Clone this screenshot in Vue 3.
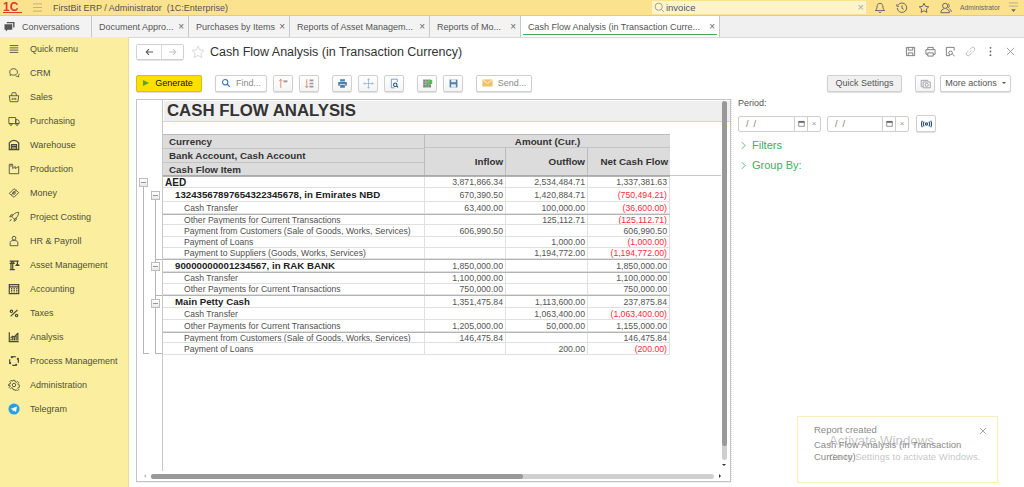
<template>
  <div class="app">
    <header class="topbar">
      <div class="logo"><span class="logo-text">1C</span></div>
      <svg class="burger" viewBox="0 0 12 10"><path d="M1 1h10M1 5h10M1 9h10" /></svg>
      <span class="app-title">FirstBit ERP / Administrator&nbsp; (1C:Enterprise)</span>
      <div class="search">
        <svg class="search-icon" viewBox="0 0 14 14"><circle cx="6" cy="6" r="4.6" /><path d="M9.5 9.5l3 3" /></svg>
        <span class="search-text">invoice</span>
        <span class="search-x">×</span>
      </div>
      <svg class="top-icon" viewBox="0 0 14 14"><path d="M7 1.5c-2.4 0-3.4 1.8-3.4 4 0 2.4-1 3.4-2 4.5h10.8c-1-1.1-2-2.1-2-4.5 0-2.2-1-4-3.4-4zM5.5 11.5c.3 1 2.7 1 3 0" /></svg>
      <svg class="top-icon" viewBox="0 0 14 14"><path d="M2.5 3.5A5.5 5.500 0 1 1 1.500 7M1 2.500v2.500h2.500M7 4v3.500l2 1" /></svg>
      <svg class="top-icon" viewBox="0 0 14 14"><path d="M7 1.500l1.700 3.600 3.800.5-2.800 2.600.7 3.900L7 10.200l-3.400 1.900.7-3.900L1.500 5.600l3.800-.5z" /></svg>
      <svg class="top-icon user-icon" viewBox="0 0 14 14"><circle cx="6" cy="4.500" r="3" /><path d="M1 12.500c0-3 2-4 3.500-4.500M7.500 8c1.500.5 3.500 1.500 3.500 4.500H1M9.500 2c1.500.5 1.800 3.500.3 4.800M11 8c1.200.6 2.200 1.600 2.200 3.500" /></svg>
      <span class="admin">Administrator</span>
      <svg class="top-menu" viewBox="0 0 12 12"><path d="M1 1h10M1 4.500h10" /><path class="fill" d="M3.500 8h5L6 11z" /></svg>
    </header>

    <nav class="tabs">
      <div class="tab tab-home">
        <svg class="conv-icon" viewBox="0 0 12 11"><path d="M3 0h8.500v6H10v-4.500H3z" /><path d="M.5 2.500h8.500v6H4L2 10.500V8.500H.5z" /></svg>
        <span>Conversations</span>
      </div>
      <div v-for="t in tabs" :key="t.label" class="tab" :class="{ active: t.active }" :style="{ width: t.w + 'px' }">
        <span class="tab-label">{{ t.label }}</span>
        <span class="tab-x">×</span>
      </div>
    </nav>

    <div class="main">
      <aside class="sidebar">
        <div v-for="m in menu" :key="m.label" class="menu-item">
          <svg class="menu-icon" :class="{ bold: m.bold }" viewBox="0 0 14 14" v-html="m.icon"></svg>
          <span>{{ m.label }}</span>
        </div>
      </aside>

      <section class="content">
        <div class="title-row">
          <div class="nav-btns">
            <button class="nav-btn"><svg viewBox="0 0 12 10"><path d="M11 5H3M6 1.500L2.500 5 6 8.500" /></svg></button>
            <button class="nav-btn off"><svg viewBox="0 0 12 10"><path d="M1 5h8M6 1.500L9.500 5 6 8.500" /></svg></button>
          </div>
          <svg class="star" viewBox="0 0 14 14"><path d="M7 1l1.800 3.900 4.200.5-3.100 2.900.8 4.200L7 10.400l-3.700 2.100.8-4.200L1 5.400l4.200-.5z" /></svg>
          <h1>Cash Flow Analysis (in Transaction Currency)</h1>
          <div class="win-icons">
            <svg viewBox="0 0 12 12"><path d="M1.500 1.500h9v9h-9zM3.500 1.500v3h5v-3M3.500 10.500v-3h5v3" /></svg>
            <svg viewBox="0 0 12 12"><path d="M3 4V1.500h6V4M3 9H1V4h10v5H9M3 7.500h6v3.500H3z" /></svg>
            <svg viewBox="0 0 12 12"><path d="M10 5V1.500H1.500v9h4M6 5.500a2 2 0 1 0 2 2 2 2 0 0 0-2-2M8 9l2.500 2" /></svg>
            <svg class="light" viewBox="0 0 12 12"><path d="M5 7l2-2M4 5L2 7a2 2 0 0 0 3 3l2-2M8 7l2-2a2 2 0 0 0-3-3L5 4" /></svg>
            <svg class="dots" viewBox="0 0 12 12"><circle cx="6" cy="2" r="1" /><circle cx="6" cy="6" r="1" /><circle cx="6" cy="10" r="1" /></svg>
            <svg class="close" viewBox="0 0 12 12"><path d="M2 2l8 8M10 2l-8 8" /></svg>
          </div>
        </div>

        <div class="toolbar">
          <button class="btn generate"><span class="play"></span>Generate</button>
          <button class="btn find">
            <svg viewBox="0 0 12 12"><circle cx="5" cy="5" r="3.200" /><path d="M7.500 7.500l3 3" /></svg>
            <span>Find...</span>
          </button>
          <button class="btn icon"><svg viewBox="0 0 14 14"><path class="red" d="M3.500 12.500V2M1.500 4l2-2.500 2 2.500" /><path class="grey" d="M7 3h5v2.500H7z" /></svg></button>
          <button class="btn icon"><svg viewBox="0 0 14 14"><path class="red" d="M3.500 1.500V12M1.500 10l2 2.500 2-2.500" /><path class="grey" d="M7 2h5v2H7zM7 6h5v2H7zM7 10h5v2H7z" /></svg></button>
          <button class="btn icon g2"><svg viewBox="0 0 14 14"><path class="blue-f" d="M4 1.500h6v3H4zM1.500 5h11v5h-2V8h-7v2h-2zM4 9h6v3.500H4z" /></svg></button>
          <button class="btn icon"><svg viewBox="0 0 14 14"><path class="blue-light" d="M7 1v12M1 7h12M5.500 2.500L7 1l1.500 1.500M5.500 11.500L7 13l1.500-1.500M2.500 5.500L1 7l1.500 1.500M11.500 5.500L13 7l-1.500 1.500" /></svg></button>
          <button class="btn icon"><svg viewBox="0 0 14 14"><path class="blue" d="M10.500 5V1.500H3v11h4" /><circle class="navy" cx="8" cy="8.500" r="2.200" /><path class="navy" d="M9.600 10l2 2" /></svg></button>
          <button class="btn icon g2"><svg viewBox="0 0 14 14"><path class="dark-f" d="M1.500 2h10v10h-10z" /><path class="light-line" d="M1.500 5h10M1.500 8h10M5 2v10M8 2v10" /><path class="green" d="M4 11l7-6.500M8 3.500h4V7.500" /></svg></button>
          <button class="btn icon"><svg viewBox="0 0 14 14"><path class="blue-f" d="M2 2h10v10H2z" /><path class="white-f" d="M4 2h6v3.500H4zM4 8h6v4H4z" /></svg></button>
          <button class="btn send g2">
            <svg viewBox="0 0 14 10"><path class="mail" d="M.5.500h13v9H.5z" /><path class="mail-line" d="M.5.500L7 5.500l6.500-5" /></svg>
            <span>Send...</span>
          </button>
          <div class="spacer"></div>
          <button class="btn quick">Quick Settings</button>
          <button class="btn icon cam"><svg viewBox="0 0 14 14"><path class="grey-line" d="M1.500 3h9M1.500 3v8h2M4 5h9v7.500H4z" /><circle class="grey-line" cx="8.500" cy="8.700" r="2" /></svg></button>
          <button class="btn more">More actions<span class="caret"></span></button>
        </div>

        <div class="workspace">
          <div class="report">
            <div class="report-body">
              <div class="gutter">
                <span class="tree-v outer"></span>
                <span class="tree-h outer-end"></span>
                <span class="tree-v inner"></span>
                <span class="tree-h inner-a"></span>
                <span class="tree-h inner-b"></span>
                <span class="tree-h inner-end"></span>
                <span v-for="b in treeBoxes" :key="b" class="box" :class="b"></span>
              </div>
              <div class="sheet">
                <div class="report-title">CASH FLOW ANALYSIS</div>
                <div class="grid-head">
                  <div class="hc h-currency">Currency</div>
                  <div class="hc h-amount">Amount (Cur.)</div>
                  <div class="hc h-bank">Bank Account, Cash Account</div>
                  <div class="hc h-inflow">Inflow</div>
                  <div class="hc h-outflow">Outflow</div>
                  <div class="hc h-net">Net Cash Flow</div>
                  <div class="hc h-item">Cash Flow Item</div>
                </div>
                <div
                  v-for="r in rows"
                  :key="r.id"
                  class="row"
                  :class="['lv' + r.lv, { heavy: r.heavy }]"
                  :style="{ height: r.h + 'px' }"
                >
                  <div class="cell name">{{ r.name }}</div>
                  <div class="cell num">{{ r.inflow }}</div>
                  <div class="cell num">{{ r.outflow }}</div>
                  <div class="cell num" :class="{ neg: r.net.startsWith('(') }">{{ r.net }}</div>
                </div>
              </div>
              <div class="vscroll">
                <div class="vtrack"><div class="vthumb"></div></div>
                <span class="sc-arrow down"></span>
              </div>
            </div>
            <div class="hscroll">
              <span class="sc-arrow left"></span>
              <div class="htrack"><div class="hthumb"></div></div>
              <span class="sc-arrow right"></span>
            </div>
          </div>

          <div class="panel">
            <div class="period-label">Period:</div>
            <div class="period-row">
              <div class="date">
                <span class="date-val">/ &nbsp;/</span>
                <span class="date-btn"><svg viewBox="0 0 10 10"><path class="cal" d="M1 2h8v7H1z" /><path class="cal-top" d="M1 1.500h8v2.500H1z" /></svg></span>
                <span class="date-btn x">×</span>
              </div>
              <div class="date second">
                <span class="date-val">/ &nbsp;/</span>
                <span class="date-btn"><svg viewBox="0 0 10 10"><path class="cal" d="M1 2h8v7H1z" /><path class="cal-top" d="M1 1.500h8v2.500H1z" /></svg></span>
                <span class="date-btn x">×</span>
              </div>
              <button class="btn period-btn">
                <svg viewBox="0 0 12 8"><circle cx="6" cy="4" r="1.200" /><path d="M3.500 1.500a4 4 0 0 0 0 5M8.500 1.500a4 4 0 0 1 0 5M1.500.5a6.500 6.500 0 0 0 0 7M10.500.5a6.500 6.500 0 0 1 0 7" /></svg>
              </button>
            </div>
            <div class="group-link first">
              <svg viewBox="0 0 6 10"><path d="M1 1l4 4-4 4" /></svg>
              <span>Filters</span>
            </div>
            <div class="group-link">
              <svg viewBox="0 0 6 10"><path d="M1 1l4 4-4 4" /></svg>
              <span>Group By:</span>
            </div>
          </div>
        </div>

        <div class="toast">
          <div class="toast-title">Report created</div>
          <div class="toast-text">Cash Flow Analysis (in Transaction Currency)</div>
          <svg class="toast-x" viewBox="0 0 8 8"><path d="M1 1l6 6M7 1L1 7" /></svg>
        </div>
        <div class="watermark">
          <div class="wm-big">Activate Windows</div>
          <div class="wm-small">Go to Settings to activate Windows.</div>
        </div>
      </section>
    </div>
  </div>
</template>

<script setup>
const tabs = [
  { label: 'Document Appro...', w: 97 },
  { label: 'Purchases by Items', w: 101 },
  { label: 'Reports of Asset Managem...', w: 140 },
  { label: 'Reports of Mo...', w: 91 },
  { label: 'Cash Flow Analysis (in Transaction Curre...', w: 199, active: true }
];

const menu = [
  { label: 'Quick menu', icon: '<path d="M2 3h10M2 5.700h10M2 8.300h10M2 11h10"/>' },
  { label: 'CRM', icon: '<path d="M2 6c0-2.500 2-4 4.500-4S11 3.500 11 6 9 9.500 6.500 9.500c-1 0-1.500 0-2.500-.5L2.500 10l.3-2C2.200 7.500 2 7 2 6zM9 10.500c.8.500 1.500.500 2.300.500l1.200.7-.2-1.700c.5-.5.700-1.200.7-2"/>' },
  { label: 'Sales', icon: '<path d="M1.500 5.500h11l-1 7h-9zM4 5.500l1-3.500h4l1 3.500M5 8v2.500M7 8v2.500M9 8v2.500"/>' },
  { label: 'Purchasing', icon: '<path d="M1 3h8v7H1zM9 5.500h2.500L13 7.500V10H9z"/><circle cx="3.500" cy="11" r="1.200"/><circle cx="10.500" cy="11" r="1.200"/>' },
  { label: 'Warehouse', icon: '<path d="M1.500 12.500V4.500C3 2.500 5 1.500 7 1.500s4 1 5.500 3v8zM4 12.500V6.500h6v6M4 8.500h6M4 10.500h6"/>', bold: true },
  { label: 'Production', icon: '<path d="M1.500 12.500V1.500h4v5l3-2.500v2.500l4-2.500v8.500zM3.500 1.500v3"/>' },
  { label: 'Money', icon: '<path d="M1.500 7.500L7 2l5.500 4.500L7 12zM4 9l6-5.500"/><circle cx="7" cy="7" r="1.500"/>' },
  { label: 'Project Costing', icon: '<path d="M6 8l-1.500-1.500C6 3.500 9 1.500 12.500 1.500 12.500 5 10.500 8 7.500 9.500zM4.500 6.500L2 7l1.500-2.500h2.500M7.500 9.500L7 12l2.500-1.500V8M2 12l2-2.500"/>' },
  { label: 'HR & Payroll', icon: '<circle cx="7" cy="3.700" r="2.200"/><path d="M2.500 12.500V9c0-1.500 1.500-2.500 3-2.500h3c1.500 0 3 1 3 2.500v3.500z"/>' },
  { label: 'Asset Management', icon: '<path d="M2 12.500h6M3.500 12.500V5M5.500 12.500V5M2 2.500h10.500M3 5h4L5.500 2.500zM11 2.500v3M9.500 7.500l1.500-2 1.500 2z"/>', bold: true },
  { label: 'Accounting', icon: '<path d="M1.500 2h11v10.500h-11zM1.500 4.500h11M3.500 6.500h1.500M6.500 6.500H8M9.500 6.500H11M3.500 8.500h1.500M6.500 8.500H8M9.500 8.500H11M3.500 10.500h1.500M6.500 10.500H8M9.500 10.500H11"/>', bold: true },
  { label: 'Taxes', icon: '<path d="M3 11l8-7.500"/><circle cx="4" cy="5" r="1.400"/><circle cx="10" cy="10" r="1.400"/>', bold: true },
  { label: 'Analysis', icon: '<path d="M1.500 1.500v11h11M3.500 11V9M5.500 11V7M7.500 11V8M9.500 11V5M11.500 11V2M3 8l2.500-2 2 1 2-2.500 2-2"/>', bold: true },
  { label: 'Process Management', icon: '<path d="M5 2.200A5.200 5.200 0 0 1 9 2.200M11.500 4.500A5.200 5.200 0 0 1 11.800 9M9 11.800A5.200 5.200 0 0 1 5 11.800M2.500 9.500A5.200 5.200 0 0 1 2.200 5"/><circle cx="4.500" cy="2.500" r=".6"/><circle cx="11.500" cy="4.500" r=".6"/><circle cx="9.500" cy="11.500" r=".6"/><circle cx="2.500" cy="9.500" r=".6"/>', bold: true },
  { label: 'Administration', icon: '<circle cx="7" cy="7" r="2"/><path d="M6 1.500h2l.3 1.700 1.400.6 1.400-1 1.400 1.400-1 1.400.6 1.400 1.700.3v2l-1.700.3-.6 1.400 1 1.400-1.400 1.400-1.400-1-1.400.6L8 12.500H6l-.3-1.700-1.400-.6-1.400 1-1.400-1.400 1-1.400-.6-1.400L.8 8V6l1.700-.3.6-1.400-1-1.400 1.400-1.400 1.400 1 1.400-.6z"/>' },
  { label: 'Telegram', icon: '<circle cx="7" cy="7" r="6.500" fill="#2a9fe0" stroke="none"/><path d="M3 7l7.500-3-1.200 6.500L7 8.800 5.800 10l-.4-2.200z" fill="#fff" stroke="none"/>' }
];

const rows = [
  { id: 1, lv: 0, h: 12, heavy: true, name: 'AED', inflow: '3,871,866.34', outflow: '2,534,484.71', net: '1,337,381.63' },
  { id: 2, lv: 1, h: 14, name: '13243567897654322345678, in Emirates NBD', inflow: '670,390.50', outflow: '1,420,884.71', net: '(750,494.21)' },
  { id: 3, lv: 2, h: 12, name: 'Cash Transfer', inflow: '63,400.00', outflow: '100,000.00', net: '(36,600.00)' },
  { id: 4, lv: 2, h: 11, heavy: true, name: 'Other Payments for Current Transactions', inflow: '', outflow: '125,112.71', net: '(125,112.71)' },
  { id: 5, lv: 2, h: 12, name: 'Payment from Customers (Sale of Goods, Works, Services)', inflow: '606,990.50', outflow: '', net: '606,990.50' },
  { id: 6, lv: 2, h: 11, name: 'Payment of Loans', inflow: '', outflow: '1,000.00', net: '(1,000.00)' },
  { id: 7, lv: 2, h: 11, name: 'Payment to Suppliers (Goods, Works, Services)', inflow: '', outflow: '1,194,772.00', net: '(1,194,772.00)' },
  { id: 8, lv: 1, h: 13, heavy: true, name: '90000000001234567, in RAK BANK', inflow: '1,850,000.00', outflow: '', net: '1,850,000.00' },
  { id: 9, lv: 2, h: 12, heavy: true, name: 'Cash Transfer', inflow: '1,100,000.00', outflow: '', net: '1,100,000.00' },
  { id: 10, lv: 2, h: 11, name: 'Other Payments for Current Transactions', inflow: '750,000.00', outflow: '', net: '750,000.00' },
  { id: 11, lv: 1, h: 13, heavy: true, name: 'Main Petty Cash', inflow: '1,351,475.84', outflow: '1,113,600.00', net: '237,875.84' },
  { id: 12, lv: 2, h: 12, name: 'Cash Transfer', inflow: '', outflow: '1,063,400.00', net: '(1,063,400.00)' },
  { id: 13, lv: 2, h: 12, name: 'Other Payments for Current Transactions', inflow: '1,205,000.00', outflow: '50,000.00', net: '1,155,000.00' },
  { id: 14, lv: 2, h: 11, heavy: true, name: 'Payment from Customers (Sale of Goods, Works, Services)', inflow: '146,475.84', outflow: '', net: '146,475.84' },
  { id: 15, lv: 2, h: 12, name: 'Payment of Loans', inflow: '', outflow: '200.00', net: '(200.00)' }
];

const treeBoxes = ['b0', 'b1', 'b2', 'b3'];
</script>

<style>
html,
body {
  margin: 0;
  background: #fff;
  overflow: hidden;
}
</style>

<style scoped>
.app {
  width: 1024px;
  height: 487px;
  display: flex;
  flex-direction: column;
  font-family: "Liberation Sans", Arial, sans-serif;
  color: #444;
  overflow: hidden;
}

button {
  font-family: inherit;
  padding: 0;
}

svg {
  fill: none;
  stroke: #555;
  stroke-width: 1;
}

.topbar {
  height: 15px;
  background: #fbe28f;
  border-bottom: 1px solid #e6cd74;
  display: flex;
  align-items: center;
  flex: none;
}

.logo {
  width: 32px;
  padding-left: 3px;
  box-sizing: border-box;
  flex: none;
}

.logo-text {
  color: #e23d2a;
  font-weight: 700;
  font-size: 12px;
  width: 19px;
  border-bottom: 1px solid #e23d2a;
  display: block;
  height: 10px;
  line-height: 10px;
}

.burger {
  width: 11px;
  height: 9px;
  stroke: #b6ab83;
  margin-right: 10px;
  flex: none;
}

.app-title {
  font-size: 9px;
  color: #555;
  white-space: nowrap;
}

.search {
  margin-left: auto;
  width: 214px;
  height: 13px;
  background: #fdf5c9;
  display: flex;
  align-items: center;
  margin-right: 8px;
  margin-top: -1px;
}

.search-icon {
  width: 11px;
  height: 11px;
  stroke: #888;
  margin-left: 2px;
}

.search-text {
  font-size: 9.5px;
  color: #555;
  margin-left: 1px;
}

.search-x {
  margin-left: auto;
  margin-right: 2px;
  font-size: 11px;
  color: #aaa;
  line-height: 11px;
}

.top-icon {
  width: 12px;
  height: 12px;
  margin-right: 10px;
  stroke: #555;
  flex: none;
}

.admin {
  font-size: 6.8px;
  color: #666;
  margin-left: -2px;
  white-space: nowrap;
}

.top-menu {
  width: 11px;
  height: 11px;
  margin-left: 8px;
  margin-right: 5px;
  stroke: #b6ab83;
  flex: none;
}

.top-menu .fill {
  fill: #666;
  stroke: none;
}

.tabs {
  height: 21px;
  background: #f0f0f0;
  border-bottom: 1px solid #d8d8d8;
  display: flex;
  flex: none;
}

.tab {
  height: 21px;
  box-sizing: border-box;
  border-right: 1px solid #c9c9c9;
  background: #f3f3f3;
  display: flex;
  align-items: center;
  font-size: 9px;
  color: #555;
  padding: 0 4px 0 7px;
  white-space: nowrap;
  flex: none;
}

.tab-home {
  width: 92px;
  padding-left: 4px;
}

.conv-icon {
  width: 11px;
  height: 10px;
  margin-right: 7px;
  fill: #555;
  stroke: none;
}

.tab-x {
  margin-left: auto;
  font-size: 10px;
  color: #666;
}

.tab.active {
  background: #fff;
  position: relative;
}

.tab.active::after {
  content: "";
  position: absolute;
  left: 2px;
  right: 2px;
  bottom: 2px;
  height: 1px;
  background: #45a85a;
}

.main {
  flex: 1;
  display: flex;
  min-height: 0;
}

.sidebar {
  width: 128px;
  background: #fbee9e;
  flex: none;
  border-right: 1px solid #e8dd98;
  margin-top: -1px;
}

.menu-item {
  height: 24px;
  display: flex;
  align-items: center;
  font-size: 9px;
  color: #4f4f45;
  padding-left: 8px;
  white-space: nowrap;
}

.menu-icon {
  width: 12px;
  height: 12px;
  margin-right: 10px;
  stroke: #4a4a3c;
  flex: none;
}

.menu-icon.bold {
  stroke-width: 1.4;
}

.content {
  flex: 1;
  position: relative;
  min-width: 0;
  padding: 5px 0 0 7px;
}

.title-row {
  height: 17px;
  display: flex;
  align-items: center;
}

.nav-btns {
  display: flex;
  border: 1px solid #d0d0d0;
  border-radius: 2px;
  box-shadow: 0 1px 1px #e4e4e4;
}

.nav-btn {
  width: 24px;
  height: 14px;
  border: 0;
  background: #fff;
  display: flex;
  align-items: center;
  justify-content: center;
}

.nav-btn + .nav-btn {
  width: 22px;
  border-left: 1px solid #d8d8d8;
}

.nav-btn svg {
  width: 10px;
  height: 8px;
  stroke: #555;
  stroke-width: 1.3;
}

.nav-btn.off svg {
  stroke: #c4c4c4;
}

.star {
  width: 14px;
  height: 14px;
  margin-left: 7px;
  stroke: #d9d9d9;
}

h1 {
  margin: 0 0 0 5px;
  font-size: 12.5px;
  font-weight: 400;
  color: #333;
  white-space: nowrap;
}

.win-icons {
  margin-left: auto;
  display: flex;
  gap: 9px;
  margin-right: 8px;
}

.win-icons svg {
  width: 11px;
  height: 11px;
  stroke: #777;
}

.win-icons .light {
  stroke: #bbb;
}

.win-icons .dots {
  fill: #666;
  stroke: none;
}

.win-icons .close {
  stroke: #999;
}

.toolbar {
  display: flex;
  align-items: center;
  margin-top: 14px;
  height: 18px;
  padding-right: 13px;
  gap: 6px;
}

.btn {
  height: 17px;
  box-sizing: border-box;
  border: 1px solid #d0d0d0;
  border-radius: 2px;
  background: #fff;
  box-shadow: 0 1px 1px #dedede;
  font-size: 9px;
  color: #666;
  display: flex;
  align-items: center;
  justify-content: center;
  flex: none;
}

.btn.icon {
  width: 20px;
  background: linear-gradient(#fff, #f4f4f4);
}

.btn.icon svg {
  width: 11px;
  height: 11px;
}

.generate {
  width: 66px;
  background: #fde000;
  border-color: #d9c200;
  color: #111;
  font-size: 9px;
  margin-right: 7px;
  padding-right: 2px;
}

.play {
  width: 0;
  height: 0;
  border-left: 6px solid #5aa62a;
  border-top: 3.5px solid transparent;
  border-bottom: 3.5px solid transparent;
  margin-right: 6px;
}

.find {
  width: 52px;
}

.find svg {
  width: 10px;
  height: 10px;
  stroke: #3c76b5;
  stroke-width: 1.3;
  margin-right: 5px;
}

.find span,
.send span {
  color: #8a8a8a;
}

.g2 {
  margin-left: 7px;
}

.red {
  stroke: #e8734f;
}

.grey {
  fill: #999;
  stroke: none;
}

.blue {
  stroke: #4f88bd;
}

.blue-light {
  stroke: #86b4da;
}

.blue-f {
  fill: #4e7fa8;
  stroke: none;
}

.navy {
  stroke: #1e4f82;
  stroke-width: 1.3;
}

.dark-f {
  fill: #7c857d;
  stroke: none;
}

.light-line {
  stroke: #c9cfc9;
  stroke-width: 0.7;
}

.green {
  stroke: #4fc04f;
  stroke-width: 2;
}

.white-f {
  fill: #e4edf4;
  stroke: none;
}

.send {
  width: 56px;
}

.send svg {
  width: 11px;
  height: 8px;
  margin-right: 5px;
}

.mail {
  fill: #f0c26a;
  stroke: none;
}

.mail-line {
  stroke: #fff;
}

.spacer {
  flex: 1;
}

.quick {
  width: 75px;
  background: #f0f0f0;
  color: #555;
  margin-right: 7px;
}

.cam {
  margin-right: -1px;
}

.grey-line {
  stroke: #8a9199;
}

.more {
  width: 71px;
  color: #555;
}

.caret {
  width: 0;
  height: 0;
  border-left: 2px solid transparent;
  border-right: 2px solid transparent;
  border-top: 2px solid #555;
  margin-left: 5px;
}

.workspace {
  display: flex;
  margin-top: 7px;
}

.report {
  width: 595px;
  height: 383px;
  box-sizing: border-box;
  border: 1px solid #c4c4c4;
  display: flex;
  flex-direction: column;
  flex: none;
  box-shadow: 0 1px 0 #eee;
}

.report-body {
  flex: 1;
  display: flex;
  min-height: 0;
  position: relative;
}

.gutter {
  width: 26px;
  box-sizing: border-box;
  border-right: 1px solid #c8c8c8;
  position: relative;
  flex: none;
}

.tree-v,
.tree-h {
  position: absolute;
  background: #b4b4b4;
}

.tree-v {
  width: 1px;
}

.tree-h {
  height: 1px;
}

.tree-v.outer {
  left: 6px;
  top: 86px;
  height: 167px;
}

.tree-h.outer-end {
  left: 6px;
  top: 253px;
  width: 6px;
}

.tree-v.inner {
  left: 18px;
  top: 99px;
  height: 154px;
}

.tree-h.inner-a {
  left: 18px;
  top: 159px;
  width: 7px;
}

.tree-h.inner-b {
  left: 18px;
  top: 195px;
  width: 7px;
}

.tree-h.inner-end {
  left: 18px;
  top: 253px;
  width: 7px;
}

.box {
  position: absolute;
  width: 7px;
  height: 7px;
  border: 1px solid #bdbdbd;
  background: linear-gradient(#fff, #e8e8e8);
}

.box::after {
  content: "";
  position: absolute;
  left: 1px;
  right: 1px;
  top: 3px;
  height: 1px;
  background: #999;
}

.b0 {
  left: 2px;
  top: 78px;
}

.b1 {
  left: 14px;
  top: 91px;
}

.b2 {
  left: 14px;
  top: 162px;
}

.b3 {
  left: 14px;
  top: 199px;
}

.sheet {
  flex: 1;
  min-width: 0;
  padding-top: 1px;
}

.report-title {
  height: 21px;
  width: 100%;
  box-sizing: border-box;
  background: #efefef;
  border-bottom: 1px solid #f2d978;
  box-shadow: inset 1px 0 0 #fff, -1px 0 0 #f2d978;
  padding-left: 4px;
  font-size: 16.8px;
  font-weight: 700;
  line-height: 20px;
  color: #333;
  margin-bottom: 12px;
}

.grid-head {
  display: grid;
  grid-template-columns: 262px 81px 82px 82px;
  grid-template-rows: 13px 14px 13px;
  width: 507px;
  background: #dcdcdc;
  font-size: 9.8px;
  font-weight: 700;
  color: #333;
  border-top: 1px solid #bbb;
  border-bottom: 1px solid #aaa;
  position: relative;
}

/* the line under the header runs on past the table */
.grid-head::after {
  content: "";
  position: absolute;
  left: 100%;
  bottom: -1px;
  width: 51px;
  height: 1px;
  background: #c8c8c8;
}

.hc {
  display: flex;
  align-items: center;
  box-sizing: border-box;
  white-space: nowrap;
}

.h-currency,
.h-bank,
.h-item {
  grid-column: 1;
  padding-left: 6px;
  border-right: 1px solid #bbb;
}

.h-bank {
  border-top: 1px solid #c4c4c4;
}

.h-item {
  border-top: 1px solid #c4c4c4;
  grid-row: 3;
}

.h-amount {
  grid-column: 2 / 5;
  grid-row: 1;
  justify-content: center;
  border-bottom: 1px solid #c4c4c4;
}

.h-inflow,
.h-outflow,
.h-net {
  grid-row: 2 / 4;
  justify-content: flex-end;
  padding-right: 2px;
  border-right: 1px solid #bbb;
}

.h-net {
  border-right: 0;
}

.row {
  display: grid;
  grid-template-columns: 262px 81px 82px 82px;
  width: 507px;
  box-sizing: border-box;
  border-bottom: 1px solid #e0e0e0;
  font-size: 8.7px;
  color: #555;
  align-items: center;
}

.row.heavy {
  border-top: 1px solid #b4b4b4;
}

.cell {
  height: 100%;
  display: flex;
  align-items: center;
  white-space: nowrap;
  box-sizing: border-box;
  border-right: 1px solid #e0e0e0;
  overflow: hidden;
}

.num {
  justify-content: flex-end;
  padding-right: 2px;
}

.neg {
  color: #ff2b3c;
}

.lv0 .name {
  font-weight: 700;
  color: #222;
  padding-left: 2px;
  font-size: 10px;
}

.lv1 .name {
  font-weight: 700;
  color: #222;
  padding-left: 12px;
  font-size: 9.7px;
}

.lv2 .name {
  padding-left: 21px;
  font-size: 8.6px;
  color: #4f4f4f;
}

.vscroll {
  width: 10px;
  position: absolute;
  right: 1px;
  top: 1px;
  bottom: 0;
  display: flex;
  flex-direction: column;
  align-items: center;
}

.vtrack {
  flex: 1;
  width: 5px;
  background: #cfcfcf;
  border-radius: 3px;
  margin-bottom: 4px;
}

.vthumb {
  height: 96%;
  background: #999;
  border-radius: 3px;
}

.sc-arrow {
  width: 0;
  height: 0;
  flex: none;
}

.sc-arrow.down {
  border-left: 2px solid transparent;
  border-right: 2px solid transparent;
  border-top: 2px solid #333;
  margin-bottom: 5px;
}

.sc-arrow.left {
  border-top: 2px solid transparent;
  border-bottom: 2px solid transparent;
  border-right: 2px solid #bbb;
}

.sc-arrow.right {
  border-top: 2px solid transparent;
  border-bottom: 2px solid transparent;
  border-left: 2px solid #333;
}

.hscroll {
  height: 10px;
  display: flex;
  align-items: center;
  padding: 0 9px 0 7px;
  flex: none;
}

.htrack {
  flex: 1;
  height: 5px;
  background: #cfcfcf;
  border-radius: 3px;
  margin: 0 5px;
}

.hthumb {
  width: 66%;
  height: 100%;
  background: #999;
  border-radius: 3px;
}

.panel {
  flex: 1;
  padding-left: 6px;
  border-left: 1px dotted #e0e0e0;
}

.period-label {
  font-size: 9px;
  color: #555;
  line-height: 11px;
  margin-top: -1px;
  margin-bottom: 6px;
}

.period-row {
  display: flex;
  align-items: center;
  gap: 6px;
}

.date {
  width: 83px;
  height: 16px;
  box-sizing: border-box;
  border: 1px solid #cfcfcf;
  border-radius: 2px;
  display: flex;
  align-items: center;
  font-size: 9px;
  color: #777;
}

.date.second {
  width: 82px;
}

.date-val {
  flex: 1;
  padding-left: 7px;
}

.date-btn {
  width: 13px;
  height: 100%;
  border-left: 1px solid #cfcfcf;
  display: flex;
  align-items: center;
  justify-content: center;
  flex: none;
  box-sizing: border-box;
}

.date-btn.x {
  color: #999;
  font-size: 8px;
}

.date-btn svg {
  width: 7px;
  height: 7px;
}

.cal {
  stroke: #666;
}

.cal-top {
  fill: #666;
  stroke: none;
}

.period-btn {
  width: 20px;
  height: 17px;
  margin-left: 1px;
}

.period-btn svg {
  width: 11px;
  height: 8px;
  stroke: #2b4f7a;
  stroke-width: 1.2;
}

.group-link {
  display: flex;
  align-items: center;
  height: 20px;
  font-size: 11px;
  color: #3dae5f;
  padding-left: 3px;
}

.group-link.first {
  margin-top: 3px;
}

.group-link svg {
  width: 5px;
  height: 9px;
  stroke: #3dae5f;
  margin-right: 6px;
}

.toast {
  position: absolute;
  left: 668px;
  top: 378px;
  width: 201px;
  height: 67px;
  box-sizing: border-box;
  border: 1px solid #fbeebc;
  background: #fff;
  padding: 7px 30px 0 16px;
  font-size: 9.5px;
  color: #8a8a8a;
  line-height: 12px;
}

.toast-title {
  margin-bottom: 3px;
}

.toast-x {
  position: absolute;
  right: 10px;
  top: 10px;
  width: 8px;
  height: 8px;
  stroke: #aaa;
}

.watermark {
  position: absolute;
  left: 700px;
  top: 395px;
  pointer-events: none;
  white-space: nowrap;
}

.wm-big {
  font-size: 13.3px;
  color: rgba(120, 120, 120, 0.45);
  line-height: 16px;
}

.wm-small {
  font-size: 9.6px;
  color: rgba(120, 120, 120, 0.45);
  line-height: 12px;
  margin-top: 2px;
}
</style>
